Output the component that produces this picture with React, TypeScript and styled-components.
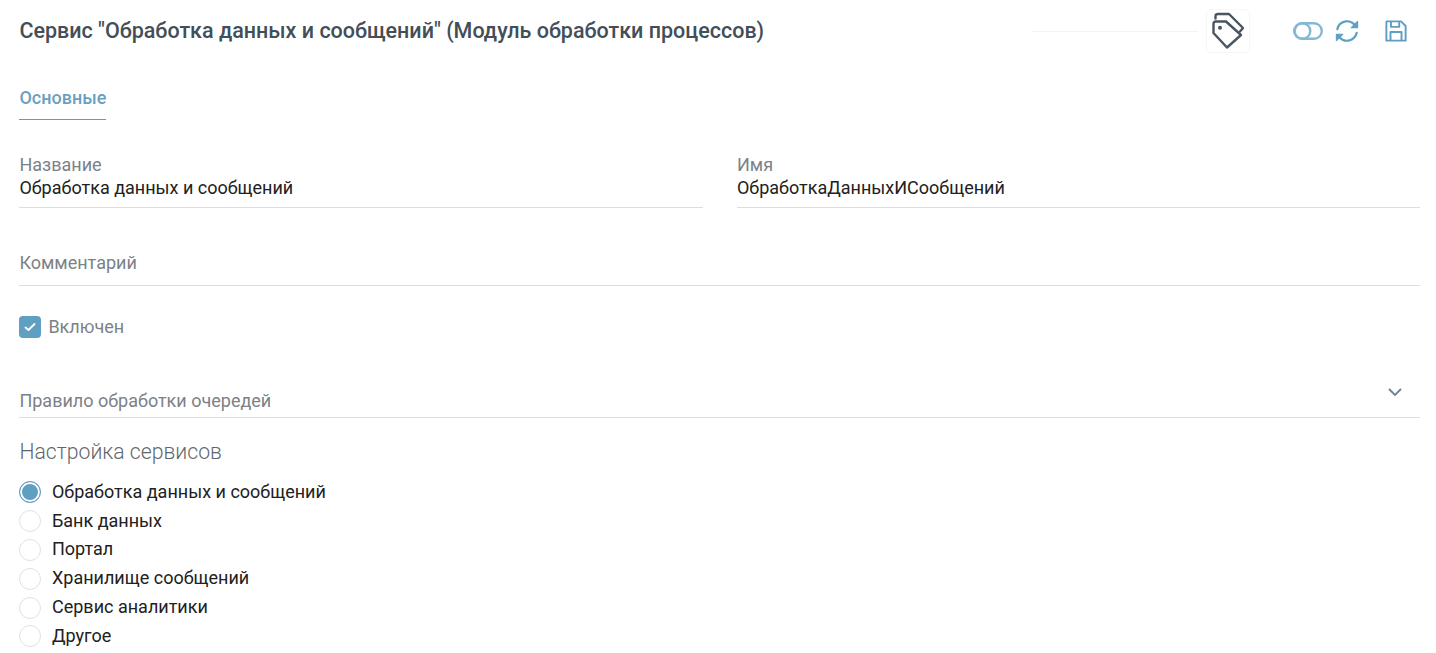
import React from 'react'
import styled, { createGlobalStyle } from 'styled-components'

const GlobalStyle = createGlobalStyle`
  html, body { margin: 0; padding: 0; background: #fff; }
  body { font-family: Roboto, "Liberation Sans", sans-serif; color: #212529; }
`

const Page = styled.div`
  width: 1436px;
  height: 653px;
  box-sizing: border-box;
  padding: 0 16px 0 19.4px;
  overflow: hidden;
`

const Header = styled.header`
  display: flex;
  align-items: center;
  height: 62px;
`

const Title = styled.h1`
  flex: 1;
  margin: 0;
  font-size: 21.5px;
  line-height: 26px;
  font-weight: 500;
  color: #424e58;
`

const Toolbar = styled.div`
  display: flex;
  align-items: center;
`

const Divider = styled.div`
  width: 166px;
  height: 1px;
  background: #f3f4f4;
  margin-right: 8px;
`

const TagButton = styled.button`
  width: 44px;
  height: 44px;
  padding: 0;
  margin-right: 43px;
  display: flex;
  align-items: center;
  justify-content: center;
  background: #fff;
  border: 1px solid #f6f7f7;
  border-radius: 5px;
`

const IconButton = styled.button<{ $gap?: number }>`
  padding: 0;
  border: 0;
  background: none;
  display: flex;
  margin-right: ${p => p.$gap ?? 0}px;
`

const Tabs = styled.nav`
  display: flex;
  margin-top: 14px;
`

const Tab = styled.div`
  font-size: 18px;
  line-height: 20px;
  font-weight: 500;
  color: #6a9fc0;
  padding: 12px 0 11px;
  border-bottom: 1px solid #6f97b2;
`

const Row = styled.div`
  display: grid;
  grid-template-columns: 684px 683px;
  column-gap: 33.6px;
  margin-top: 35px;
`

const Field = styled.div<{ $height?: number; $pad?: number }>`
  display: flex;
  flex-direction: column;
  justify-content: flex-end;
  height: ${p => p.$height ?? 53}px;
  box-sizing: border-box;
  padding-bottom: ${p => p.$pad ?? 8}px;
  border-bottom: 1px solid #dedede;
  position: relative;
`

const Label = styled.span`
  font-size: 18px;
  line-height: 22px;
  color: #7b8287;
`

const Value = styled.span`
  font-size: 18px;
  line-height: 23px;
  color: #212121;
`

const CommentField = styled(Field)`
  margin-top: 28px;
  width: 1401px;
`

const CheckRow = styled.label`
  display: flex;
  align-items: center;
  gap: 7px;
  margin-top: 30px;
  height: 22px;
  font-size: 18px;
  color: #7b8287;
`

const CheckBox = styled.span`
  width: 22px;
  height: 22px;
  border-radius: 4px;
  background: #5f9fc1;
  display: flex;
  align-items: center;
  justify-content: center;
`

const RowText = styled.span`
  margin-bottom: 2px;
`

const SelectField = styled(Field)`
  margin-top: 29px;
  width: 1401px;
`

const Chevron = styled.svg`
  position: absolute;
  right: 17px;
  top: 20px;
`

const Section = styled.h2`
  margin: 20px 0 0;
  font-size: 21.2px;
  line-height: 28px;
  font-weight: 300;
  color: #5f676d;
`

const RadioList = styled.div`
  display: flex;
  flex-direction: column;
  margin-top: 12px;
`

const RadioRow = styled.label`
  display: flex;
  align-items: center;
  height: 28.8px;
  gap: 10.6px;
  font-size: 18px;
  color: #212121;
`

const RadioDot = styled.span<{ $on?: boolean }>`
  width: 22px;
  height: 22px;
  box-sizing: border-box;
  border-radius: 50%;
  border: 1px solid ${p => (p.$on ? '#5f9fc1' : '#e2e2e2')};
  background: ${p => (p.$on ? '#5f9fc1' : '#fff')};
  box-shadow: ${p => (p.$on ? 'inset 0 0 0 2px #fff' : 'none')};
`

const radios = ['Обработка данных и сообщений', 'Банк данных', 'Портал', 'Хранилище сообщений', 'Сервис аналитики', 'Другое']

const TagsIcon = () => (
  <svg width="34" height="38" viewBox="0 0 34 38" fill="none" stroke="#4a5560" strokeWidth="2.4" strokeLinejoin="round" strokeLinecap="round">
    <path d="M2.5 12 V21 L16 35.5 L30 23 L15 9.5 H5 Q2.5 9.5 2.5 12 Z" />
    <path d="M4.5 6.5 V4 Q4.5 2 7 2 H18 L32 16 L29 19.5" />
    <circle cx="9" cy="15.7" r="2" fill="#4a5560" stroke="none" />
  </svg>
)

const ToggleIcon = () => (
  <svg width="30" height="18" viewBox="0 0 30 18" fill="none" stroke="#84b9d4" strokeWidth="2.4">
    <rect x="1.2" y="1.2" width="27.6" height="15.6" rx="7.8" />
    <circle cx="9.5" cy="9" r="7.8" />
  </svg>
)

const SyncIcon = () => (
  <svg width="24" height="24" viewBox="0 0 26 26" fill="none" stroke="#5f9fc1" strokeWidth="2.4" strokeLinecap="round" strokeLinejoin="round">
    <path d="M2.5 11 A10.8 10.8 0 0 1 21 6 L23 8" />
    <path d="M24.5 2.5 V9.5 H17.5 Z" fill="#5f9fc1" strokeWidth="1.2" />
    <path d="M23.5 15 A10.8 10.8 0 0 1 5 20 L3 18" />
    <path d="M1.5 23.5 V16.5 H8.5 Z" fill="#5f9fc1" strokeWidth="1.2" />
  </svg>
)

const SaveIcon = () => (
  <svg width="22" height="22" viewBox="0 0 24 24" fill="none" stroke="#5f9fc1" strokeWidth="2.1" strokeLinejoin="round">
    <path d="M2 1.5 H17.5 L22.5 6.5 V22.5 H1.5 V2 Z" />
    <path d="M6.5 1.5 V7.5 H15.5 V1.5" />
    <path d="M6 22.5 V13 H18 V22.5" />
  </svg>
)

const App = () => {
  return (
    <Page>
      <GlobalStyle />
      <Header>
        <Title>Сервис "Обработка данных и сообщений" (Модуль обработки процессов)</Title>
        <Toolbar>
          <Divider />
          <TagButton><TagsIcon /></TagButton>
          <IconButton $gap={12}><ToggleIcon /></IconButton>
          <IconButton $gap={26}><SyncIcon /></IconButton>
          <IconButton $gap={13}><SaveIcon /></IconButton>
        </Toolbar>
      </Header>
      <Tabs>
        <Tab>Основные</Tab>
      </Tabs>
      <Row>
        <Field>
          <Label>Название</Label>
          <Value>Обработка данных и сообщений</Value>
        </Field>
        <Field>
          <Label>Имя</Label>
          <Value>ОбработкаДанныхИСообщений</Value>
        </Field>
      </Row>
      <CommentField $height={50} $pad={11}>
        <Label>Комментарий</Label>
      </CommentField>
      <CheckRow>
        <CheckBox>
          <svg width="12" height="10" viewBox="0 0 12 10" fill="none" stroke="#fff" strokeWidth="1.8" strokeLinecap="round" strokeLinejoin="round">
            <path d="M1.5 5.5 L4.5 8 L10.5 2" />
          </svg>
        </CheckBox>
        <RowText>Включен</RowText>
      </CheckRow>
      <SelectField $height={51} $pad={5}>
        <Label>Правило обработки очередей</Label>
        <Chevron width="16" height="10" viewBox="0 0 16 10" fill="none" stroke="#6b8396" strokeWidth="1.8">
          <path d="M2 2 L8 8 L14 2" />
        </Chevron>
      </SelectField>
      <Section>Настройка сервисов</Section>
      <RadioList>
        {radios.map((r, i) => (
          <RadioRow key={r}>
            <RadioDot $on={i === 0} />
            <RowText>{r}</RowText>
          </RadioRow>
        ))}
      </RadioList>
    </Page>
  )
}

export default App
